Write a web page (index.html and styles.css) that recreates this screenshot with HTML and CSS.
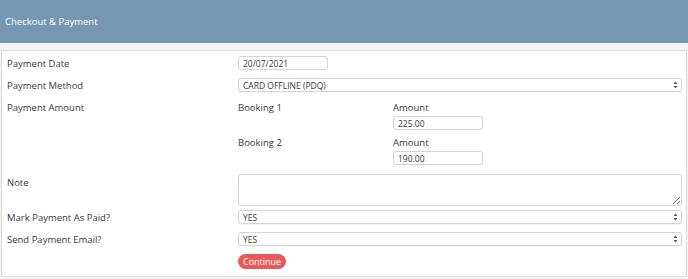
FILE: index.html
```html
<!DOCTYPE html>
<html>
<head>
  <meta charset="UTF-8">
  <title>Checkout &amp; Payment</title>
  <link rel="stylesheet" href="styles.css">
</head>
<body>
  <div class="header">
    <h1 class="title">Checkout &amp; Payment</h1>
  </div>

  <div class="page">
    <form class="card">
      <div class="form-row">
        <label class="form-label">Payment Date</label>
        <div class="form-field">
          <input type="text" class="input input-short" value="20/07/2021">
        </div>
      </div>

      <div class="form-row">
        <label class="form-label">Payment Method</label>
        <div class="form-field">
          <div class="select-wrap">
            <select class="select"><option>CARD OFFLINE (PDQ)</option></select>
            <svg class="select-arrows" width="5" height="8" viewBox="0 0 5 8"><path d="M2.5 0.5L4.5 3H0.5z M2.5 7.5L4.5 5H0.5z" fill="#555"/></svg>
          </div>
        </div>
      </div>

      <div class="form-row">
        <label class="form-label">Payment Amount</label>
        <div class="form-field bookings">
          <div class="booking">
            <span class="booking-name">Booking 1</span>
            <div class="booking-amount">
              <span class="amount-label">Amount</span>
              <input type="text" class="input input-short" value="225.00">
            </div>
          </div>
          <div class="booking">
            <span class="booking-name">Booking 2</span>
            <div class="booking-amount">
              <span class="amount-label">Amount</span>
              <input type="text" class="input input-short" value="190.00">
            </div>
          </div>
        </div>
      </div>

      <div class="form-row row-note">
        <label class="form-label">Note</label>
        <div class="form-field">
          <textarea class="textarea"></textarea>
        </div>
      </div>

      <div class="form-row">
        <label class="form-label">Mark Payment As Paid?</label>
        <div class="form-field">
          <div class="select-wrap">
            <select class="select"><option>YES</option></select>
            <svg class="select-arrows" width="5" height="8" viewBox="0 0 5 8"><path d="M2.5 0.5L4.5 3H0.5z M2.5 7.5L4.5 5H0.5z" fill="#555"/></svg>
          </div>
        </div>
      </div>

      <div class="form-row">
        <label class="form-label">Send Payment Email?</label>
        <div class="form-field">
          <div class="select-wrap">
            <select class="select"><option>YES</option></select>
            <svg class="select-arrows" width="5" height="8" viewBox="0 0 5 8"><path d="M2.5 0.5L4.5 3H0.5z M2.5 7.5L4.5 5H0.5z" fill="#555"/></svg>
          </div>
        </div>
      </div>

      <div class="form-row">
        <span class="form-label"></span>
        <div class="form-field">
          <button type="button" class="continue-button">Continue</button>
        </div>
      </div>
    </form>
  </div>
</body>
</html>
```

FILE: styles.css
```css
:root {
  --header-color: #7697b1;
  --page-bg: #f4f4f5;
  --border-color: #dcdcdc;
  --text-color: #3a3a3a;
  --danger-color: #e85a5a;
}

body {
  margin: 0;
  font-family: 'Open Sans', sans-serif;
  font-size: 9.5px;
  color: var(--text-color);
  background: var(--page-bg);
}

.header {
  height: 43px;
  background: var(--header-color);
  display: flex;
  align-items: center;
  padding-left: 5px;
}

.title {
  margin: 0;
  font-size: 9.5px;
  font-weight: 400;
  color: #ffffff;
}

.page {
  padding: 7px 1px 2px 1px;
}

.card {
  display: flex;
  flex-direction: column;
  gap: 8px;
  background: #ffffff;
  border: 1px solid var(--border-color);
  padding: 5px 4px 8px 5px;
  height: 227px;
  box-sizing: border-box;
}

.form-row {
  display: flex;
  align-items: flex-start;
}

/* text sits a pixel lower than the field centre */
.form-label,
.booking-name,
.amount-label {
  line-height: 14px;
  padding-top: 1px;
  margin-bottom: -1px;
}

.form-label {
  width: 231px;
  flex-shrink: 0;
}

.form-field {
  flex-grow: 1;
}

.input,
.select,
.textarea {
  font-family: inherit;
  font-size: 8.5px;
  color: var(--text-color);
  border: 1px solid #d4d4d4;
  border-radius: 3px;
  background: #ffffff;
  box-sizing: border-box;
  outline: none;
}

.input {
  height: 14px;
  padding: 0 4px;
  display: block;
}

.input-short {
  width: 90px;
}

.select-wrap {
  position: relative;
}

.select {
  width: 100%;
  height: 14px;
  padding: 0 4px;
  appearance: none;
  display: block;
  box-shadow: 0 1px 0 rgba(0,0,0,0.03);
}

.select-arrows {
  position: absolute;
  right: 4px;
  top: 3px;
}

.bookings {
  display: flex;
  flex-direction: column;
  gap: 5px;
}

.booking {
  display: flex;
  align-items: flex-start;
}

.booking-name {
  width: 155px;
}

.booking-amount {
  display: flex;
  flex-direction: column;
  gap: 2px;
}

.row-note {
  margin-top: 1px;
}

.row-note .form-label {
  margin-top: 1px;
}

.textarea {
  width: 100%;
  height: 32px;
  display: block;
  resize: vertical;
  margin-bottom: -4px;
}

.continue-button {
  font-family: inherit;
  font-size: 9px;
  color: #ffffff;
  background: var(--danger-color);
  border: none;
  border-radius: 8px;
  height: 15px;
  padding: 0 5px;
  cursor: pointer;
}
```
